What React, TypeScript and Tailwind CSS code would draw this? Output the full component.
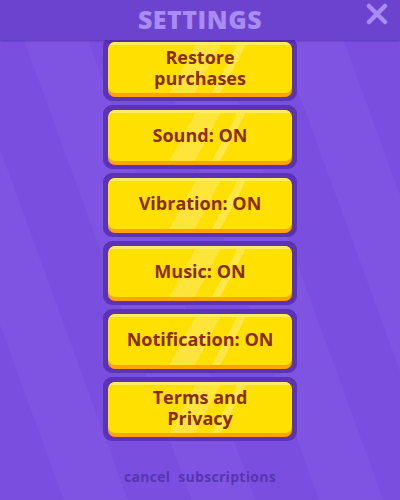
const items = [
  "Restore\npurchases",
  "Sound: ON",
  "Vibration: ON",
  "Music: ON",
  "Notification: ON",
  "Terms and\nPrivacy",
];

function YellowButton({ label }: { label: string }) {
  return (
    <div className="rounded-[9px] bg-[#5b33b3] p-[5px] pb-[4px]">
      <div className="flex h-[55px] overflow-hidden rounded-[7px] bg-[#f7a600] pb-[4px]">
        <div className="relative flex h-full w-full items-center justify-center overflow-hidden rounded-[7px] bg-[linear-gradient(118deg,#ffe000_0%,#ffe000_42%,#ffe53a_42%,#ffe53a_54%,#ffe000_54%,#ffe000_62%,#ffe845_62%,#ffe845_66%,#ffe000_66%)]">
          <div className="absolute inset-x-0 top-0 h-[3px] bg-[#ffed60]" />
          <span className="relative whitespace-pre-line text-center text-[18px] font-bold leading-[21px] text-[#8a2c05]">
            {label}
          </span>
        </div>
      </div>
    </div>
  );
}

export default function App() {
  return (
    <div className="flex h-[500px] w-[400px] flex-col overflow-hidden bg-[#7a4fdf] bg-[repeating-linear-gradient(70deg,#7a4fdf_0px,#7a4fdf_60px,#8054e2_60px,#8054e2_120px)] font-['Open_Sans',sans-serif]">
      <div className="relative flex h-[40px] shrink-0 items-center justify-center bg-[#6b43cf] shadow-[0_1px_2px_rgba(60,30,140,0.5)]">
        <h1 className="text-[25px] font-extrabold tracking-[0.5px] text-[#a88cf2]">SETTINGS</h1>
        <svg className="absolute right-[12px] top-[3px]" width="22" height="22" viewBox="0 0 22 22">
          <path d="M3 3 L19 19 M19 3 L3 19" stroke="#a88cf2" strokeWidth="4.5" strokeLinecap="round" />
        </svg>
      </div>
      <div className="mx-auto mt-[-3px] flex w-[194px] flex-col gap-[4px]">
        {items.map((label) => (
          <YellowButton key={label} label={label} />
        ))}
      </div>
      <p className="mt-[25px] text-center text-[14px] font-bold tracking-[0.3px] text-[#5734b3]">
        cancel&nbsp;&nbsp;subscriptions
      </p>
    </div>
  );
}
